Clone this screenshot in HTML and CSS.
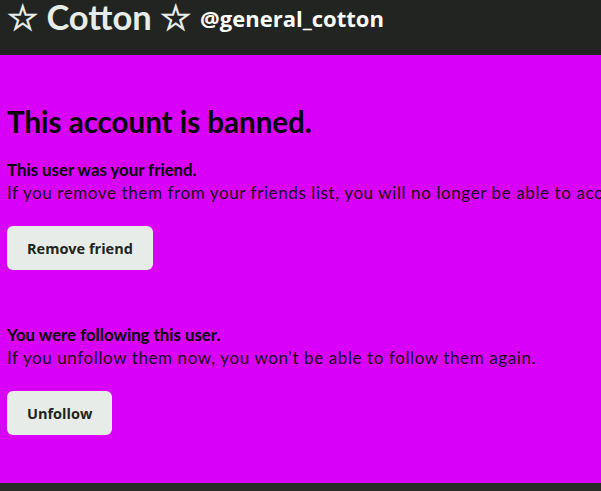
FILE: index.html
```html
<!DOCTYPE html>
<html>
<head>
<meta charset="utf-8">
<link rel="stylesheet" href="styles.css">
</head>
<body>
<header class="top">
  <h1 class="name">☆ Cotton ☆</h1>
  <span class="handle">@general_cotton</span>
</header>
<main class="banned">
  <h2 class="title">This account is banned.</h2>
  <section class="block">
    <h3 class="sub">This user was your friend.</h3>
    <p class="desc">If you remove them from your friends list, you will no longer be able to access their content.</p>
    <button class="btn">Remove friend</button>
  </section>
  <section class="block">
    <h3 class="sub">You were following this user.</h3>
    <p class="desc">If you unfollow them now, you won't be able to follow them again.</p>
    <button class="btn">Unfollow</button>
  </section>
</main>
<footer class="bottom"></footer>
</body>
</html>
```
FILE: styles.css
```css
html, body {
  margin: 0;
  padding: 0;
  overflow: hidden;
}
body {
  width: 601px;
  height: 491px;
  background: #212420;
  font-family: Lato, "Noto Sans", sans-serif;
}
.top {
  height: 55px;
  background: #212420;
  display: flex;
  align-items: flex-start;
  gap: 9px;
  padding: 0 7px;
  box-sizing: border-box;
  white-space: nowrap;
}
.name {
  margin: -3px 0 0;
  font-size: 34.5px;
  line-height: 40px;
  font-weight: 700;
  color: #e8ece8;
}
.handle {
  font-family: "Open Sans", Lato, sans-serif;
  font-weight: 700;
  font-size: 22px;
  line-height: 36px;
  color: #ffffff;
}
.banned {
  background: #d900f9;
  height: 428px;
  padding: 50px 7px 0;
  box-sizing: border-box;
  white-space: nowrap;
  overflow: hidden;
}
.title {
  margin: 0 0 19px;
  font-size: 29.5px;
  line-height: 34px;
  font-weight: 700;
  color: #000;
}
.block {
  margin-bottom: 53px;
}
.sub {
  margin: 0;
  font-size: 16.8px;
  line-height: 24px;
  font-weight: 700;
  color: #000;
}
.desc {
  margin: 0 0 22px;
  font-size: 17px;
  line-height: 22px;
  letter-spacing: 0.6px;
  color: #1a0020;
}
.btn {
  display: block;
  border: none;
  background: #e8ece8;
  border-radius: 6px;
  height: 44px;
  padding: 0 20px;
  font-family: "Open Sans", Lato, sans-serif;
  font-weight: 700;
  font-size: 14.5px;
  color: #212420;
}
.bottom {
  height: 8px;
  background: #2a2c28;
}
```
